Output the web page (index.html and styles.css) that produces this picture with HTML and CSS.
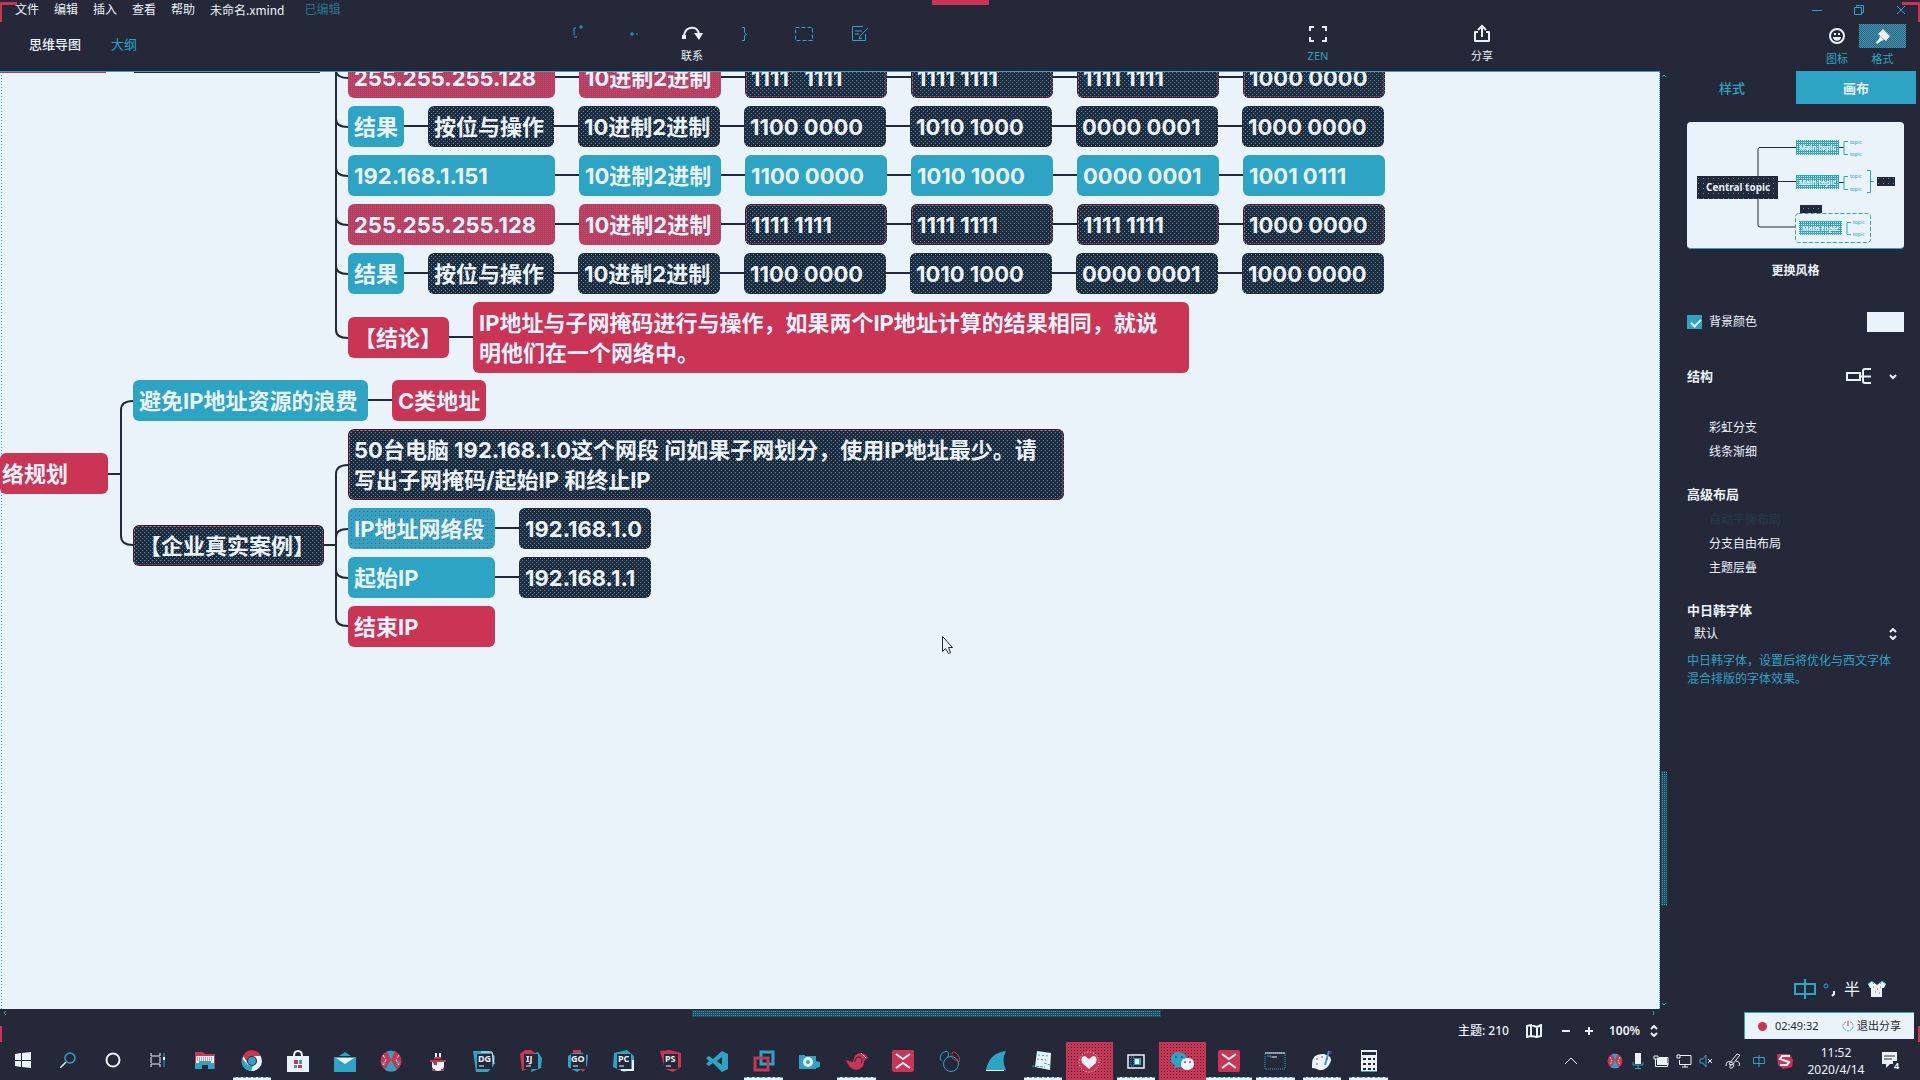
FILE: index.html
```html
<!DOCTYPE html>
<html lang="zh-CN">
<head>
<meta charset="utf-8">
<title>未命名.xmind</title>
<link rel="stylesheet" href="styles.css">
</head>
<body>
<header class="header">
  <div class="titlebar">
    <nav class="menu">
      <button>文件</button><button>编辑</button><button>插入</button><button>查看</button><button>帮助</button>
    </nav>
    <span class="doc-name">未命名.xmind</span>
    <span class="doc-state">已编辑</span>
    <div class="window-buttons">
      <button aria-label="最小化"><svg width="10" height="10"><path d="M0 5.500h10"/></svg></button>
      <button aria-label="还原"><svg width="10" height="10"><path d="M.5 2.500h7v7h-7zM2.500 2.500v-2h7v7h-2"/></svg></button>
      <button aria-label="关闭"><svg width="10" height="10"><path d="M1 1l8 8M9 1l-8 8"/></svg></button>
    </div>
  </div>
  <div class="toolbar">
    <div class="view-tabs"><button class="current">思维导图</button><button>大纲</button></div>
    <div class="tools">
      <button class="tool" aria-label="主题"><svg width="22" height="20"><path d="M7 4H5v9h3" stroke-dasharray="9 2"/><path d="M11 2h2v2h-2z"/></svg></button>
      <button class="tool" aria-label="子主题"><svg width="22" height="20"><path d="M6 9h2v2H6zM11 10h2"/></svg></button>
      <button class="tool on"><svg width="22" height="20"><path d="M3 11C5 2 16 1 18 10" stroke-width="2"/><path d="M1 11h4v4H1zM13 9h9l-4 7z" fill="currentColor" stroke="none"/></svg><span>联系</span></button>
      <button class="tool" aria-label="概要"><svg width="22" height="20"><path d="M5 3.500h2.500v5l2 2-2 1v5H5"/></svg></button>
      <button class="tool" aria-label="外框"><svg width="22" height="20"><path d="M2.500 3.500h17v13h-17z" stroke-dasharray="4 2"/></svg></button>
      <button class="tool" aria-label="笔记"><svg width="22" height="20"><path d="M14 2.500H3.500v14h13V10M6 7h7M6 10h4M19 4l-8 8-1 3 3-1"/></svg></button>
    </div>
    <div class="actions">
      <button class="tool on teal-label"><svg width="22" height="20"><path d="M3 7V3h4M15 3h4v4M19 13v4h-4M7 17H3v-4" stroke-width="2"/></svg><span>ZEN</span></button>
      <button class="tool on share"><svg width="22" height="20"><path d="M7 8H4v9h14V8h-3" stroke-width="2" stroke-linejoin="round"/><path d="M11 13V3M7 6l4-4 4 4" stroke-width="2"/></svg><span>分享</span></button>
    </div>
    <div class="panels">
      <button class="panel-button"><span class="pill"><svg width="16" height="16"><circle cx="8" cy="8" r="7" stroke-width="2"/><path d="M4 9h8c0 5-8 5-8 0zM5 5h2v2H5zM9 5h2v2H9z" fill="currentColor" stroke="none"/></svg></span><span class="caption">图标</span></button>
      <button class="panel-button active"><span class="pill"><svg width="16" height="16"><path d="M8 1l7 7-4 5-8-7zM5 8l4 4-3 1-4 3-1-2 3-3z" fill="currentColor" stroke="none"/></svg></span><span class="caption">格式</span></button>
    </div>
  </div>
</header>

<main class="workspace">
  <section class="editor">
    <div class="canvas-row">
      <div class="canvas">
        <svg class="links" width="560" height="600" viewBox="0 71 560 600">
          <path d="M0 72h106" stroke="#ca3455"/><path d="M106 71h26" stroke="#2ea4c5"/><path d="M134 72h186" />
          <path d="M336 71V330Q336 338 348 338M336 70Q336 78 348 78M336 119Q336 127 348 127M336 168Q336 176 348 176M336 217Q336 225 348 225M336 266Q336 274 348 274"/>
          <path d="M108 474H121M133 401Q121 401 121 410V536Q121 545 133 545"/>
          <path d="M324 545H336M348 465Q336 465 336 474V618Q336 626 348 626M348 529Q336 529 336 537M348 578Q336 578 336 570"/>
        </svg>
        <div class="topic red root">络规划</div>
        <div class="tree address-tree">
          <div class="row"><div class="topic mixed address">255.255.255.128</div><div class="topic mixed octet">10进制2进制</div><div class="topic wine octet">1111   1111</div><div class="topic wine octet">1111 1111</div><div class="topic wine octet">1111 1111</div><div class="topic wine octet">1000 0000</div></div>
          <div class="row"><div class="topic blue">结果</div><div class="topic dark operation">按位与操作</div><div class="topic dark octet">10进制2进制</div><div class="topic dark octet">1100 0000</div><div class="topic dark octet">1010 1000</div><div class="topic dark octet">0000 0001</div><div class="topic dark octet">1000 0000</div></div>
          <div class="row"><div class="topic blue address">192.168.1.151</div><div class="topic blue octet">10进制2进制</div><div class="topic blue octet">1100 0000</div><div class="topic blue octet">1010 1000</div><div class="topic blue octet">0000 0001</div><div class="topic blue octet">1001 0111</div></div>
          <div class="row"><div class="topic mixed address">255.255.255.128</div><div class="topic mixed octet">10进制2进制</div><div class="topic wine octet">1111 1111</div><div class="topic wine octet">1111 1111</div><div class="topic wine octet">1111 1111</div><div class="topic wine octet">1000 0000</div></div>
          <div class="row"><div class="topic blue">结果</div><div class="topic dark operation">按位与操作</div><div class="topic dark octet">10进制2进制</div><div class="topic dark octet">1100 0000</div><div class="topic dark octet">1010 1000</div><div class="topic dark octet">0000 0001</div><div class="topic dark octet">1000 0000</div></div>
          <div class="row"><div class="topic red summary">【结论】</div><div class="topic red long">IP地址与子网掩码进行与操作，如果两个IP地址计算的结果相同，就说<br>明他们在一个网络中。</div></div>
        </div>
        <div class="tree plan-tree">
          <div class="row"><div class="topic blue waste">避免IP地址资源的浪费</div><div class="topic red">C类地址</div></div>
          <div class="row">
            <div class="topic wine case">【企业真实案例】</div>
            <div class="children">
              <div class="row"><div class="topic wine long">50台电脑 192.168.1.0这个网段 问如果子网划分，使用IP地址最少。请<br>写出子网掩码/起始IP 和终止IP</div></div>
              <div class="row"><div class="topic speck field">IP地址网络段</div><div class="topic dark value">192.168.1.0</div></div>
              <div class="row"><div class="topic blue field">起始IP</div><div class="topic dark value">192.168.1.1</div></div>
              <div class="row"><div class="topic red field">结束IP</div></div>
            </div>
          </div>
        </div>
        <svg class="pointer" width="12" height="18"><path d="M.5.500v15l3-3 3 5 2-1-2-5h4z" fill="#eaf2fa" stroke="#252838"/></svg>
      </div>
      <div class="vscroll">
        <svg width="6" height="4"><path d="M1 3l2-2 2 2"/></svg>
        <div class="vthumb"></div>
        <svg class="down" width="6" height="4"><path d="M1 1l2 2 2-2"/></svg>
      </div>
    </div>
    <div class="hscroll"><svg width="4" height="6"><path d="M3 1L1 3l2 2"/></svg><div class="hthumb"></div><svg class="right" width="4" height="6"><path d="M1 1q2 2 0 4"/></svg></div>
    <footer class="status">
      <span class="count">主题: 210</span>
      <button aria-label="导航"><svg width="16" height="14"><path d="M1 2l4-1v11l-4 1zM5 1l6 2v10l-6-1M11 3l4-2v11l-4 1" stroke-width="2"/></svg></button>
      <button class="minus" aria-label="缩小"><svg width="8" height="10"><path d="M0 5h8" stroke-width="2"/></svg></button>
      <button class="plus" aria-label="放大"><svg width="8" height="10"><path d="M0 5h8M4 1v8" stroke-width="2"/></svg></button>
      <button class="zoom">100%<svg width="8" height="12"><path d="M1 4l3-3 3 3M1 8l3 3 3-3" stroke-width="2"/></svg></button>
    </footer>
  </section>

  <aside class="sidebar">
    <div class="side-tabs"><button>样式</button><button class="current">画布</button></div>
    <div class="side-body">
      <div class="theme-card">
        <svg width="217" height="126" viewBox="0 0 217 126" fill="none">
          <defs>
            <pattern id="check" width="4" height="4" patternUnits="userSpaceOnUse"><path d="M0 0h4v4H0z" fill="#2ea4c5"/><path d="M0 0h1v1H0zM2 2h1v1H2zM2 0h1v1H2zM0 2h1v1H0z" fill="#eaf2fa"/></pattern>
            <pattern id="speck" width="5" height="5" patternUnits="userSpaceOnUse"><path d="M0 0h5v5H0z" fill="#252838"/><path d="M1 1h1v1H1z" fill="#2ea4c5"/></pattern>
          </defs>
          <path d="M109 25.500H73q-2 0-2 2V54M71 77v26q0 2 2 2h36M91 59.500h18M152 25.500h5M152 60.500h5" stroke="#252838"/>
          <path d="M161 19.500h-4v13h4M161 54.500h-4v13h4M164 100.500h-4v12h4M180 48.500h3.500v22H180M184 59.500h3" stroke="#2ea4c5"/>
          <path d="M10 54h81v23H10z" fill="url(#speck)"/>
          <path d="M109 18h43v15h-43zM109 53h43v14h-43zM112 99h43v14h-43z" fill="url(#check)"/>
          <path d="M190 55h18v9h-18zM113 83h22v8h-22z" fill="url(#speck)"/>
          <rect x="108.500" y="91.500" width="75" height="29" rx="3" stroke="#2ea4c5" stroke-dasharray="4 2"/>
          <g fill="#eaf2fa" font-weight="700"><text x="19" y="69" font-size="10">Central topic</text><g font-size="7"><text x="112" y="28">Main topic</text><text x="112" y="63">Main topic</text><text x="115" y="109">Main topic</text></g></g>
          <g fill="#2ea4c5" font-size="5"><text x="163" y="22">topic</text><text x="163" y="34">topic</text><text x="163" y="56">topic</text><text x="163" y="69">topic</text><text x="166" y="102">topic</text><text x="166" y="114">topic</text></g>
        </svg>
      </div>
      <button class="change">更换风格</button>
      <div class="option background"><input id="bg" type="checkbox" checked><label for="bg">背景颜色</label><button class="swatch" aria-label="选择颜色"></button></div>
      <div class="structure"><h2>结构</h2><button aria-label="选择结构"><svg width="52" height="18"><path d="M1 6h13v7H1zM14 9.500h11M25 2h-6q-2 0-2 2v10q0 2 2 2h6" stroke-width="2"/><path d="M44 8l3 3 3-3" stroke-width="2"/></svg></button></div>
      <div class="option"><input id="rainbow" type="checkbox"><label for="rainbow">彩虹分支</label></div>
      <div class="option"><input id="taper" type="checkbox"><label for="taper">线条渐细</label></div>
      <h2 class="advanced">高级布局</h2>
      <div class="option faint"><input id="balance" type="checkbox" disabled><label for="balance">自动平衡布局</label></div>
      <div class="option"><input id="free" type="checkbox"><label for="free">分支自由布局</label></div>
      <div class="option"><input id="overlap" type="checkbox"><label for="overlap">主题层叠</label></div>
      <h2 class="font-title" id="cjk-font">中日韩字体</h2>
      <div class="font-select"><select aria-labelledby="cjk-font"><option>默认</option></select><svg width="8" height="12"><path d="M1 4l3-3 3 3M1 8l3 3 3-3" stroke-width="2"/></svg></div>
      <p>中日韩字体，设置后将优化与西文字体混合排版的字体效果。</p>
    </div>
  </aside>
</main>

<footer class="taskbar">
  <div class="system">
    <button aria-label="开始"><svg width="16" height="16" fill="#eaf2fa"><path d="M0 2l6-1v7H0zM7 1l9-1v8H7zM0 9h6v6l-6-1zM7 9h9v7l-9-1z"/></svg></button>
    <button aria-label="搜索"><svg width="16" height="16"><circle cx="10" cy="6" r="5" stroke="#2ea4c5" stroke-width="1.500"/><path d="M6 10l-6 6" stroke="#eaf2fa" stroke-width="1.500"/></svg></button>
    <button aria-label="Cortana"><svg width="16" height="16"><circle cx="8" cy="8" r="6.500" stroke="#eaf2fa" stroke-width="2"/></svg></button>
    <button aria-label="任务视图"><svg width="16" height="16"><path d="M1 1v3h9V1M1 15v-3h9v3M1 5v6M10 5v6" stroke="#eaf2fa"/><path d="M14 1v14" stroke="#2ea4c5"/><path d="M14 5v3" stroke="#eaf2fa" stroke-width="2"/></svg></button>
  </div>
  <div class="apps">
    <button aria-label="资源管理器"><svg width="22" height="22"><path d="M1 2h8l2 2h10v15H1z" fill="#ca3455"/><path d="M2 6h18v8H2z" fill="#eaf2fa"/><path d="M3 8h15M3 10h15" stroke="#ca3455" stroke-dasharray="1 1"/><path d="M1 13h4v-2h12v2h3v6H1z" fill="#2ea4c5"/><path d="M8 15h6v4H8z" fill="#252838"/></svg></button>
    <button class="open" aria-label="Chrome"><svg width="22" height="22"><circle cx="11" cy="11" r="10" fill="#eaf2fa"/><path d="M2 6a10 10 0 0 1 18 0H11L7 13z" fill="#ca3455"/><path d="M1 8l6 7 5 1-2 5A10 10 0 0 1 1 8z" fill="#2ea4c5"/><circle cx="11" cy="11" r="5" fill="#252838"/><circle cx="11" cy="11" r="4" fill="#2ea4c5"/></svg></button>
    <button aria-label="应用商店"><svg width="22" height="22"><path d="M0 6h22v16H0z" fill="#eaf2fa"/><path d="M7 6q0-5 4-5t4 5" stroke="#eaf2fa" stroke-width="2"/><path d="M7 10h4v4H7zM11 15h4v3h-4z" fill="#ca3455"/><path d="M12 10h3v4h-3zM7 15h3v3H7z" fill="#2ea4c5"/></svg></button>
    <button aria-label="邮件"><svg width="22" height="22"><path d="M0 7h22v15H0zM5 6l6-4 6 4z" fill="#2ea4c5"/><path d="M2 8h18l-9 6z" fill="#eaf2fa"/></svg></button>
    <button aria-label="浏览器"><svg width="22" height="22"><circle cx="11" cy="11" r="10.500" fill="#ca3455"/><path d="M7 1h8l-4 9 6 10q-6 3-12 0l6-10zM1 12h4v4zM21 12h-4v4z" fill="#2ea4c5"/><path d="M3 5l3 5-3 5M19 5l-3 5 3 5" stroke="#eaf2fa" stroke-dasharray="3 2"/></svg></button>
    <button aria-label="助手"><svg width="16" height="22"><path d="M2 10h12v7q-1 4-6 4t-6-4z" fill="#eaf2fa"/><path d="M0 10h16v2H7v3H4l-1-3H0z" fill="#ca3455"/><path d="M6 3v4M10 3v4" stroke="#eaf2fa" stroke-width="2"/><path d="M4 8h7" stroke="#ca3455" stroke-width="2"/><path d="M2 20h3M11 20h3" stroke="#ca3455" stroke-width="2"/></svg></button>
    <button aria-label="DataGrip"><svg width="22" height="22"><path d="M0 1h16l6 5-1 9-6 7H3z" fill="#2ea4c5"/><path d="M8 2h11l2 12" stroke="#eaf2fa"/><path d="M4 4h15v15H4z" fill="#252838"/><text x="5" y="12">DG</text><path d="M6 16h5" stroke="#eaf2fa"/></svg></button>
    <button aria-label="IntelliJ"><svg width="22" height="22"><path d="M0 4l5-4h6l5 4v12L2 21z" fill="#ca3455"/><path d="M13 4l5-2 4 6-1 10-10 4z" fill="#2ea4c5"/><path d="M4 4h14v15H4z" fill="#252838"/><text x="6" y="12">IJ</text><path d="M6 16h5" stroke="#eaf2fa"/></svg></button>
    <button aria-label="GoLand"><svg width="22" height="22"><path d="M1 6l8-5 12 4-1 11-10 6L1 17z" fill="#2ea4c5"/><path d="M6 0h8v3H6zM12 18h7l-3 4z" fill="#ca3455"/><path d="M4 4h15v15H4z" fill="#252838"/><text x="4" y="12">GO</text><path d="M6 16h5" stroke="#eaf2fa"/></svg></button>
    <button aria-label="PyCharm"><svg width="22" height="22"><path d="M1 3l13-3 7 6v13l-10 3L0 17z" fill="#2ea4c5"/><path d="M20 10v10H8" stroke="#eaf2fa" stroke-width="2"/><path d="M4 4h14v15H4z" fill="#252838"/><text x="5" y="12">PC</text><path d="M6 16h5" stroke="#eaf2fa"/></svg></button>
    <button aria-label="PhpStorm"><svg width="22" height="22"><path d="M0 1l10-1 11 3v14l-8 5-8-3z" fill="#ca3455"/><path d="M4 4h14v15H4z" fill="#252838"/><text x="5" y="12">PS</text><path d="M6 16h5" stroke="#eaf2fa"/></svg></button>
    <button aria-label="VS Code"><svg width="22" height="22"><path d="M16 1l6 3v15l-6 3L7 13l-4 3-3-2 3-3-3-3 3-2 4 3zM16 7l-5 4 5 4z" fill="#2ea4c5" fill-rule="evenodd"/></svg></button>
    <button class="open" aria-label="VMware"><svg width="22" height="22"><path d="M8 2h12v12H8z" stroke="#2ea4c5" stroke-width="3"/><path d="M2 8h13v12H2z" stroke="#ca3455" stroke-width="3"/></svg></button>
    <button aria-label="录像"><svg width="22" height="22"><path d="M0 5h6v1h11v5l4 1v5l-4 1v1H0z" fill="#2ea4c5"/><circle cx="9" cy="12" r="5" fill="#eaf2fa"/><circle cx="9" cy="12" r="2" fill="#2ea4c5"/></svg></button>
    <button class="open" aria-label="下载"><svg width="22" height="22"><path d="M0 10l7 2q1-9 8-9 6 1 7 5l-4 3q0 8-8 9-7-1-10-10z" fill="#ca3455"/><path d="M9 12q0-5 4-5 5 1 2 6" stroke="#252838"/><path d="M15 3l5 5" stroke="#eaf2fa" stroke-dasharray="2 1"/></svg></button>
    <button aria-label="XMind"><svg width="22" height="22"><rect width="22" height="22" rx="2" fill="#ca3455"/><path d="M4 4l7 5 7-5M4 18l7-5 7 5" stroke="#eaf2fa" stroke-width="2"/></svg></button>
    <button aria-label="网络"><svg width="22" height="22"><circle cx="12" cy="14" r="7.500" stroke="#2ea4c5"/><path d="M2 11Q-1 3 8 1q3 2 1 6" stroke="#2ea4c5"/><path d="M13 8q-1-9 4-5 5 4 3 9z" stroke="#ca3455"/></svg></button>
    <button aria-label="Wireshark"><svg width="22" height="22"><path d="M1 20Q4 3 21 1q-5 9 0 19z" fill="#2ea4c5"/><path d="M1 20.500h18" stroke="#eaf2fa"/></svg></button>
    <button class="open" aria-label="记事本"><svg width="22" height="22"><path d="M5 1l14 2-1 17-15-3z" fill="#eaf2fa"/><path d="M6 5l11 1M5 9l9 1" stroke="#2ea4c5" stroke-dasharray="2 2"/><path d="M0 16l13 1M12 13l6 2" stroke="#2ea4c5" stroke-dasharray="3 1"/></svg></button>
    <button class="open tile" aria-label="健康"><svg width="22" height="22"><circle cx="11" cy="11" r="10" fill="#ca3455" stroke="#eaf2fa" stroke-dasharray="1 2"/><path d="M11 18L4 12Q2 5 7 5l4 3 4-3q5 0 3 7z" fill="#eaf2fa"/></svg></button>
    <button class="open" aria-label="虚拟机"><svg width="22" height="22"><path d="M3 5h16v13H3z" stroke="#eaf2fa" stroke-width="1.500"/><path d="M6 7h3v9H6z" stroke="#2ea4c5" stroke-dasharray="1 1"/><path d="M9 8h7v7H9z" fill="#2ea4c5"/><path d="M10 9h4v5h-4z" fill="#eaf2fa"/></svg></button>
    <button class="open tile" aria-label="微信"><svg width="24" height="22"><path d="M1 9q0-8 8-8 8 1 8 8 0 7-8 7l-5 1 1-3q-4-2-4-5z" fill="#2ea4c5"/><path d="M11 13q0-6 7-6 6 0 6 6 0 5-6 6-7 0-7-6z" fill="#eaf2fa"/><path d="M14 11h2M19 11h2M5 6h2M11 6h2" stroke="#252838"/></svg></button>
    <button class="open wide" aria-label="XMind ZEN"><svg width="22" height="22"><rect width="22" height="22" rx="2" fill="#ca3455"/><path d="M4 4l7 5 7-5M4 18l7-5 7 5" stroke="#eaf2fa" stroke-width="2"/></svg></button>
    <button class="open" aria-label="终端"><svg width="22" height="22"><path d="M1 3h20v16H1z" stroke="#2ea4c5" stroke-dasharray="1 1"/><path d="M1 3h20M8 7h5" stroke="#eaf2fa"/><path d="M3 6h4v2" stroke="#2ea4c5"/></svg></button>
    <button class="open" aria-label="画图"><svg width="22" height="22"><path d="M1 14Q1 3 13 4l5 2q4 3 0 9t-10 5q-3-2-7-2z" fill="#eaf2fa"/><path d="M18 1l-4 14" stroke="#2ea4c5" stroke-width="2"/><path d="M5 9h2M10 7h2M5 14h2M15 9h2M20 1v3" stroke="#ca3455"/></svg></button>
    <button class="open" aria-label="计算器"><svg width="16" height="22"><path d="M0 0h16v22H0z" fill="#eaf2fa"/><path d="M1 2h14v3H1zM2 8h3v2H2zM7 8h3v2H7zM12 8h2v2h-2zM2 13h3v2H2zM7 13h3v2H7zM12 13h2v2h-2zM2 18h3v2H2zM7 18h3v2H7zM12 18h2v2h-2z" fill="#252838"/><path d="M0 21.500h16" stroke="#2ea4c5"/></svg></button>
  </div>
  <div class="tray">
    <button class="more" aria-label="更多"><svg width="12" height="8"><path d="M0 7l6-6 6 6" stroke="#eaf2fa"/></svg></button>
    <button aria-label="代理"><svg width="16" height="16"><circle cx="8" cy="8" r="7.500" fill="#ca3455"/><path d="M5 1h6L8 7l4 8H4l4-8z" fill="#2ea4c5"/><path d="M3 4l2 4-2 4M13 4l-2 4 2 4" stroke="#eaf2fa" stroke-dasharray="2 1"/></svg></button>
    <button aria-label="麦克风"><svg width="12" height="16"><path d="M3 0h6v11H3z" fill="#eaf2fa"/><path d="M1 9v3h10V9M6 12v4M3 15.500h6" stroke="#2ea4c5"/></svg></button>
    <button aria-label="电池"><svg width="16" height="14"><path d="M4 4h10v7H4z" fill="#eaf2fa"/><path d="M2.500 5v7.500h12V9M1 2h4v3H1zM6 3.500h9V11" stroke="#eaf2fa"/></svg></button>
    <button aria-label="显示器"><svg width="16" height="14"><path d="M4 1.500h11v9H3.500V6M6 13h6M9 10v3M1 1h3v3H1z" stroke="#eaf2fa"/></svg></button>
    <button aria-label="静音"><svg width="16" height="14"><path d="M1 5h3l3-4v12L4 9H1z" stroke="#2ea4c5"/><path d="M9 5l4 4M13 5l-4 4" stroke="#eaf2fa"/></svg></button>
    <button class="pen" aria-label="笔"><svg width="16" height="16"><path d="M4 11L12 1l3 1-8 10zM1 13q0-6 5-4t1 6q-4 1-1-4M11 8q5 1 3 5" stroke="#eaf2fa"/></svg></button>
    <button class="ime" aria-label="输入法"><svg width="14" height="14"><path d="M1.500 3.500h11v6h-11z" stroke="#2ea4c5"/><path d="M7 1v12" stroke="#2ea4c5"/></svg></button>
    <button class="ime" aria-label="搜狗"><svg width="16" height="16"><path d="M0 1h13l3 6-1 7-9 2-5-4z" fill="#ca3455"/><path d="M13 3H5L3 6l9 3-2 3H3" stroke="#eaf2fa" stroke-width="2"/></svg></button>
    <time class="clock">11:52<br>2020/4/14</time>
    <button class="notice" aria-label="通知"><svg width="18" height="18"><path d="M0 0h15v12H8l-4 4v-4H0z" fill="#eaf2fa"/><path d="M2 4h11M2 7h8" stroke="#252838"/><path d="M11 9h7v9h-7z" fill="#252838"/><text x="12" y="17">4</text></svg></button>
  </div>
</footer>

<div class="share-bar"><span class="record"></span><span>02:49:32</span><button><svg width="12" height="12"><path d="M4 2q-4 2-3 5t5 4q5-1 5-5T8 2" stroke="#2ea4c5" stroke-dasharray="2 1"/><path d="M6 1v5" stroke="#ca3455"/></svg>退出分享</button></div>
<div class="ime-bar">
  <svg width="22" height="20"><path d="M1 5h20v10H1zM11 0v20" stroke="#2ea4c5" stroke-width="2"/></svg>
  <svg width="14" height="20"><circle cx="3" cy="7" r="2" stroke="#2ea4c5"/><path d="M11 12v3l-2 2" stroke="#eaf2fa" stroke-width="2"/></svg>
  <span>半</span>
  <svg width="20" height="18"><path d="M1 4l4-3 5 4 5-4 4 3-2 4h-2v9H4V8H3z" fill="#eaf2fa"/><path d="M1 4l4-3 2 3M19 4l-4-3-2 3" stroke="#2ea4c5"/><path d="M6 7h1M10 9h1M13 7h1M8 12h1M12 13h1" stroke="#ca3455"/></svg>
</div>
<div class="mark top-left"></div><div class="mark top-right"></div><div class="mark top-center"></div><div class="mark bottom-left"></div><div class="mark bottom-right"></div>
</body>
</html>
```
FILE: styles.css
```css
:root {
  --dark: #252838;
  --blue: #2ea4c5;
  --red: #ca3455;
  --light: #eaf2fa;
}
* { box-sizing: border-box; }
body {
  margin: 0;
  height: 100vh;
  display: flex;
  flex-direction: column;
  overflow: hidden;
  background: var(--dark);
  color: var(--light);
  font: 12px/16px "Noto Sans", "Noto Sans CJK SC", sans-serif;
}
button, select {
  padding: 0;
  border: 0;
  background: none;
  color: inherit;
  font: inherit;
}
svg { display: block; flex: none; }
h2, p { margin: 0; }

/* Header */
.header, .toolbar button, .window-buttons, .status, .structure button, .font-select, .vscroll, .hscroll { stroke: currentColor; fill: none; }
.titlebar { display: flex; align-items: center; height: 20px; padding-left: 15px; }
.menu { display: flex; gap: 15px; }
.doc-name { margin-left: 15px; font-family: "Noto Sans CJK SC", sans-serif; }
.doc-state { margin-left: 20px; color: var(--blue); opacity: .6; }
.window-buttons { display: flex; gap: 32px; margin-left: auto; padding-right: 14px; color: var(--blue); }
.toolbar { display: flex; height: 51px; }
.view-tabs { display: flex; flex: 0 0 552px; gap: 30px; padding: 15px 0 0 29px; align-items: flex-start; font-size: 13px; line-height: 18px; color: var(--blue); }
.view-tabs .current { color: var(--light); font-weight: 500; }
.tools, .actions, .panels { display: flex; align-items: flex-start; }
.tool { width: 56px; padding-top: 4px; display: flex; flex-direction: column; align-items: center; gap: 4px; color: var(--blue); font-size: 11px; }
.tool.on { color: var(--light); }
.tool span, .caption { stroke: none; }
.teal-label span { color: var(--blue); }
.actions { margin-left: auto; gap: 108px; }
.panels { margin-left: 305px; padding-right: 14px; }
.panel-button { width: 44px; padding-top: 4px; display: flex; flex-direction: column; align-items: center; gap: 3px; font-size: 11px; color: var(--blue); }
.panel-button.active { width: 47px; }
.pill { display: flex; width: 100%; height: 24px; align-items: center; justify-content: center; color: var(--light); }
.active .pill { background: repeating-conic-gradient(#42526a 0 25%, var(--blue) 0 50%) 0 0 / 2px 2px; }

/* Work area */
.workspace { flex: 1; min-height: 0; display: flex; }
.editor { flex: 1; min-width: 0; display: flex; flex-direction: column; }
.canvas-row { flex: 1; min-height: 0; display: flex; }
.canvas { position: relative; flex: 1; min-width: 0; overflow: hidden; background: var(--light); border-top: 1px solid var(--blue); border-right: 1px dotted var(--blue); }
.canvas::before { content: ""; position: absolute; inset: 0 auto 0 1px; width: 1px; background: repeating-linear-gradient(var(--blue) 0 1px, transparent 1px 3px); }
.links { position: absolute; top: -1px; left: 0; stroke: var(--dark); stroke-width: 2; fill: none; }
.tree { position: absolute; display: flex; flex-direction: column; gap: 8px; }
.address-tree { left: 348px; top: -15px; }
.plan-tree { left: 133px; top: 308px; }
.row { display: flex; align-items: center; gap: 24px; }
.children { display: flex; flex-direction: column; gap: 8px; }
.topic {
  position: relative;
  flex: none;
  min-height: 41px;
  padding: 6px 6px 5px;
  border-radius: 6px;
  color: var(--light);
  font: 700 22px/30px Inter, "Noto Sans CJK SC", sans-serif;
  white-space: pre;
}
.topic + .topic::before { content: ""; position: absolute; left: -24px; top: 19px; width: 24px; height: 2px; background: var(--dark); }
.topic + .long::before { top: 34px; }
.root { position: absolute; left: 0; top: 381px; width: 108px; padding-left: 2px; }
.red { background: var(--red); }
.blue { background: var(--blue); }
.dark, .wine {
  background: conic-gradient(from 90deg at 3px 3px, var(--blue) 25%, transparent 0) 0 0 / 4px 4px, conic-gradient(from 90deg at 3px 3px, var(--blue) 25%, transparent 0) 2px 2px / 4px 4px, var(--dark);
}
.wine { outline: 1px dotted var(--red); outline-offset: -2px; }
.mixed { background: conic-gradient(from 90deg at 1px 1px, #7f6b8e 25%, transparent 0) 0 0 / 2px 2px, var(--red); }
.speck { background: conic-gradient(from 90deg at 3px 3px, var(--red) 25%, transparent 0) 0 0 / 4px 4px, var(--blue); }
.address { width: 207px; }
.octet { width: 142px; }
.operation { width: 126px; }
.summary { width: 101px; }
.long { width: 716px; }
.waste { width: 235px; }
.case { width: 191px; top: 7px; }
.field { width: 147px; }
.value { width: 132px; }
.pointer { position: absolute; left: 942px; top: 564px; }
.vscroll { width: 8px; padding: 3px 1px; display: flex; flex-direction: column; color: var(--blue); }
.vthumb { height: 135px; margin-top: 693px; }
.vthumb, .hthumb { background: conic-gradient(from 90deg at 1px 1px, var(--blue) 25%, #254859 0) 0 0 / 2px 2px; }
.down { margin-top: auto; }
.hscroll { height: 8px; display: flex; align-items: center; padding: 0 12px 0 3px; color: var(--blue); }
.hthumb { width: 469px; height: 7px; margin-left: 685px; }
.right { margin-left: auto; }
.status { height: 23px; display: flex; align-items: center; justify-content: flex-end; padding: 4px 10px 0 0; font-weight: 500; }
.status button { margin-left: 17px; }
.status .minus { margin-left: 20px; }
.status .plus { margin-left: 15px; }
.status .zoom { display: flex; align-items: center; gap: 10px; margin-left: 16px; font-weight: 600; }
.count, .zoom { stroke: none; }
.zoom svg { stroke: currentColor; }

/* Sidebar */
.sidebar { width: 252px; }
.side-tabs { display: flex; padding-right: 4px; height: 33px; font-size: 13px; }
.side-tabs button { flex: 128; color: var(--blue); font-weight: 500; }
.side-tabs .current { flex: 120; background: var(--blue); color: var(--light); font-weight: 700; }
.side-body { padding: 18px 16px 0 19px; }
.theme-card { background: var(--light); border-radius: 4px; border-bottom: 1px solid var(--blue); }
.change { display: block; width: 100%; height: 26px; margin-top: 9px; font-weight: 700; }
.option { display: flex; align-items: center; height: 24px; gap: 7px; }
.option input { appearance: none; width: 15px; height: 14px; margin: 0; }
.option input:checked { background: var(--blue); }
.option input:checked::before { content: ""; display: block; width: 8px; height: 4px; margin: 4px 0 0 4px; border: solid var(--light); border-width: 0 0 2px 2px; transform: rotate(-45deg); }
.background { margin-top: 26px; }
.swatch { width: 37px; height: 20px; margin-left: auto; background: var(--light); }
.structure { display: flex; justify-content: space-between; align-items: center; height: 20px; margin: 32px 6px 30px 0; }
h2 { font-size: 13px; line-height: 20px; font-weight: 700; }
.advanced { margin: 20px 0 4px; }
.faint { opacity: .12; color: var(--blue); }
.font-title { margin-top: 20px; }
.font-select { display: flex; align-items: center; height: 28px; padding: 0 7px; }
.font-select select { flex: 1; appearance: none; }
.sidebar p { margin-top: 4px; padding-right: 10px; line-height: 18px; color: var(--blue); }

/* Taskbar */
.taskbar { height: 40px; display: flex; padding-right: 20px; fill: none; }
.taskbar button { display: flex; align-items: center; justify-content: center; }
.taskbar text { font-size: 9px; font-weight: 700; fill: var(--light); }
.system { display: flex; }
.system button { width: 45px; }
.apps { display: flex; flex: 0 1 1210px; margin-left: 2px; }
.apps button { flex: 1; min-width: 0; position: relative; padding-top: 2px; }
.open::after { content: ""; position: absolute; left: 4px; right: 4px; bottom: 0; height: 2px; border-top: 1px dashed var(--blue); background: var(--light); }
.tile { background: conic-gradient(from 90deg at 2px 2px, var(--dark) 25%, transparent 0) 0 0 / 3px 3px, var(--red); background-clip: padding-box; border-top: 2px solid transparent; }
.tile::after { left: 0; right: 0; background: var(--red); border: 0; }
.wide::after { left: 0; right: 0; }
.tray { display: flex; align-items: center; margin-left: auto; gap: 7px; padding-top: 2px; }
.tray button { width: 16px; }
.tray .more { margin-right: 21px; }
.tray .pen { margin-left: 3px; }
.tray .ime { margin-left: 3px; }
.clock { width: 72px; text-align: center; line-height: 17px; }
.tray .notice { width: 18px; margin-left: 3px; }

/* Floating bars and recording frame */
.share-bar { position: absolute; right: 6px; bottom: 41px; width: 170px; height: 27px; display: flex; align-items: center; padding: 0 13px; background: var(--light); border: solid var(--blue); border-width: 1px 0 0 1px; color: var(--dark); font-size: 11px; fill: none; }
.record { width: 9px; height: 9px; margin-right: 8px; border-radius: 50%; background: var(--red); }
.share-bar button { display: flex; align-items: center; gap: 3px; margin-left: auto; }
.ime-bar { position: absolute; right: 33px; bottom: 81px; display: flex; align-items: center; gap: 7px; font-size: 16px; line-height: 20px; fill: none; }
.mark { position: absolute; border: 0 solid var(--red); }
.top-left { left: 0; top: 2px; width: 17px; height: 20px; border-width: 3px 0 0 2px; }
.top-right { right: 0; top: 2px; width: 18px; height: 20px; border-width: 3px 2px 0 0; }
.top-center { left: 932px; top: 0; width: 57px; border-top-width: 5px; }
.bottom-left { left: 0; bottom: 38px; height: 16px; border-left-width: 2px; }
.bottom-right { right: 0; bottom: 38px; height: 16px; border-right-width: 2px; }
```
